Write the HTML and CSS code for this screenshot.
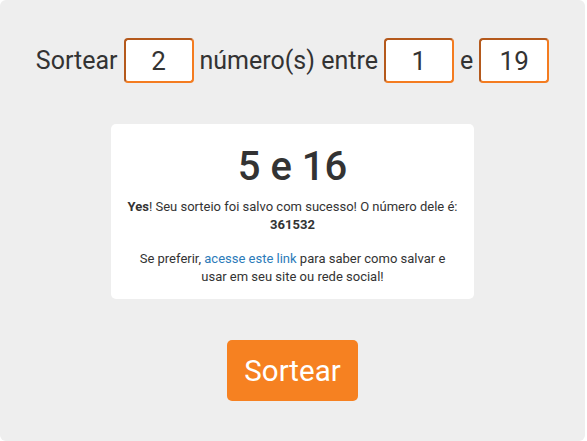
FILE: index.html
```html
<!DOCTYPE html>
<html lang="pt">
<head>
<meta charset="utf-8">
<link rel="stylesheet" href="styles.css">
</head>
<body>
<div class="panel">
  <form class="row">
    <span class="label">Sortear</span>
    <input class="num" type="text" value="2">
    <span class="label">número(s) entre</span>
    <input class="num" type="text" value="1">
    <span class="label">e</span>
    <input class="num" type="text" value="19">
  </form>
  <div class="card">
    <h1 class="result">5 e 16</h1>
    <p class="msg"><strong>Yes</strong>! Seu sorteio foi salvo com sucesso! O número dele é: <strong>361532</strong></p>
    <p class="msg">Se preferir, <a class="link" href="#">acesse este link</a> para saber como salvar e usar em seu site ou rede social!</p>
  </div>
  <div class="actions">
    <button class="btn" type="button">Sortear</button>
  </div>
</div>
</body>
</html>
```

FILE: styles.css
```css
html, body {
  margin: 0;
  padding: 0;
  background: #ffffff;
}
body {
  font-family: Roboto, "Liberation Sans", Arial, sans-serif;
  color: #333333;
}
.panel {
  width: 585px;
  height: 441px;
  box-sizing: border-box;
  background: #eeeeee;
  border-radius: 6px;
  padding-top: 38px;
  display: flex;
  flex-direction: column;
  align-items: center;
}
.row {
  margin: 0;
  display: flex;
  align-items: center;
  justify-content: center;
  gap: 6px;
  height: 45px;
}
.label {
  font-size: 25px;
  line-height: 45px;
  color: #333333;
}
.num {
  width: 70px;
  height: 45px;
  box-sizing: border-box;
  border: 2px solid;
  border-color: #b4591c #f47c20 #f47c20 #b4591c;
  border-radius: 4px;
  background: #ffffff;
  font-family: Roboto, "Liberation Sans", Arial, sans-serif;
  font-size: 26px;
  color: #333333;
  text-align: center;
  padding: 0;
  outline: none;
}
.card {
  margin-top: 41px;
  width: 363px;
  height: 175px;
  box-sizing: border-box;
  background: #ffffff;
  border-radius: 5px;
  padding: 19px 16px 0;
  text-align: center;
}
.result {
  margin: 0 0 7px;
  font-size: 40px;
  font-weight: 500;
  line-height: 48px;
  color: #333333;
}
.msg {
  margin: 0 0 16px;
  font-size: 13px;
  line-height: 18px;
  color: #333333;
}
.msg:last-child {
  margin-bottom: 0;
}
.msg strong {
  font-weight: 700;
}
.link {
  color: #2b7bb9;
  text-decoration: none;
}
.actions {
  margin-top: 41px;
}
.btn {
  width: 131px;
  height: 61px;
  border: none;
  border-radius: 5px;
  background: #f68121;
  color: #ffffff;
  font-family: Roboto, "Liberation Sans", Arial, sans-serif;
  font-size: 29.5px;
  padding: 0;
  cursor: pointer;
}
```
